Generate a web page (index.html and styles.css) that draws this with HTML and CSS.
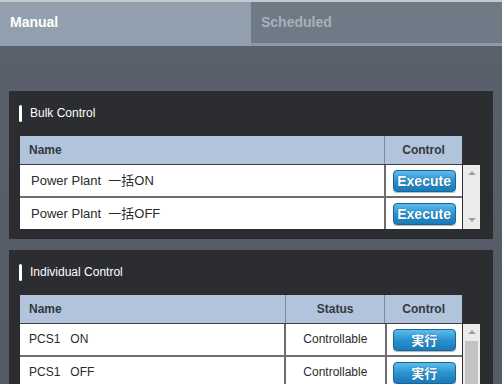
FILE: index.html
```html
<!DOCTYPE html>
<html lang="en">
<head>
    <meta charset="UTF-8">
    <meta name="viewport" content="width=device-width, initial-scale=1.0">
    <title>Control</title>
    <link rel="stylesheet" href="styles.css">
</head>
<body>
    <div class="tabs">
        <div class="tab active">Manual</div>
        <div class="tab">Scheduled</div>
    </div>

    <div class="content">
        <section class="panel">
            <h2 class="panel-title">Bulk Control</h2>
            <div class="grid">
                <div class="head">
                    <div class="cell name">Name</div>
                    <div class="cell ctrl">Control</div>
                </div>
                <div class="body">
                    <div class="rows">
                        <div class="row">
                            <div class="cell name big">Power Plant&nbsp;&nbsp;一括ON</div>
                            <div class="cell ctrl"><button class="btn">Execute</button></div>
                        </div>
                        <div class="row">
                            <div class="cell name big">Power Plant&nbsp;&nbsp;一括OFF</div>
                            <div class="cell ctrl"><button class="btn">Execute</button></div>
                        </div>
                    </div>
                    <div class="scrollbar">
                        <span class="arrow up"></span>
                        <span class="arrow down"></span>
                    </div>
                </div>
            </div>
        </section>

        <section class="panel">
            <h2 class="panel-title">Individual Control</h2>
            <div class="grid">
                <div class="head">
                    <div class="cell name short">Name</div>
                    <div class="cell status">Status</div>
                    <div class="cell ctrl">Control</div>
                </div>
                <div class="body">
                    <div class="rows">
                        <div class="row">
                            <div class="cell name short">PCS1&nbsp;&nbsp;&nbsp;ON</div>
                            <div class="cell status">Controllable</div>
                            <div class="cell ctrl"><button class="btn jp">実行</button></div>
                        </div>
                        <div class="row">
                            <div class="cell name short">PCS1&nbsp;&nbsp;&nbsp;OFF</div>
                            <div class="cell status">Controllable</div>
                            <div class="cell ctrl"><button class="btn jp">実行</button></div>
                        </div>
                    </div>
                    <div class="scrollbar">
                        <span class="arrow up"></span>
                        <span class="thumb"></span>
                    </div>
                </div>
            </div>
        </section>
    </div>
</body>
</html>
```

FILE: styles.css
```css
body {
    margin: 0;
    height: 384px;
    overflow: hidden;
    font-family: "Liberation Sans", "Noto Sans CJK JP", sans-serif;
    background: linear-gradient(#5a616c, #545b66);
    border-top: 2px solid #c6c9cd;
}

.tabs {
    display: flex;
    height: 44px;
    background-color: #8e99a7;
}

.tab {
    width: 251px;
    height: 41px;
    padding-left: 10px;
    box-sizing: border-box;
    line-height: 41px;
    font-size: 14px;
    font-weight: bold;
    color: #a9b0b9;
    background-color: #6f7a87;
}

.tab.active {
    height: 44px;
    color: #fff;
    background-color: #929fae;
}

.content {
    padding: 45px 9px 0 9px;
}

.panel {
    background-color: #2b2d31;
    padding: 14px 13px 10px 11px;
    margin-bottom: 11px;
}

.panel-title {
    margin: 0 0 14px 0;
    height: 17px;
    line-height: 17px;
    font-size: 12px;
    font-weight: normal;
    color: #fff;
    display: flex;
    align-items: center;
}

.panel-title::before {
    content: "";
    width: 3px;
    height: 17px;
    border-radius: 2px;
    background-color: #fff;
    margin: 0 8px 0 -1px;
}

.grid {
    width: 460px;
}

.head {
    display: flex;
    width: 442px;
    height: 28px;
    background-color: #b1c4dc;
    border-bottom: 1px solid #3c4048;
}

.head .cell {
    font-size: 12px;
    font-weight: bold;
    color: #333840;
    line-height: 28px;
}

.body {
    display: flex;
}

.rows {
    width: 442px;
}

.row {
    display: flex;
    height: 31px;
    background-color: #fff;
    border-bottom: 2px solid #6d6d6d;
}

.row:last-child {
    border-bottom: none;
}

.row .cell {
    line-height: 31px;
    font-size: 12px;
    color: #2a2a2a;
}

.cell.name {
    width: 365px;
    padding-left: 9px;
    box-sizing: border-box;
}

.cell.name.short {
    width: 266px;
}

.row .cell.big {
    font-size: 13px;
    padding-left: 11px;
}

.cell.status {
    width: 99px;
    text-align: center;
    border-left: 1px solid #6d6d6d;
}

.cell.ctrl {
    width: 77px;
    text-align: center;
    border-left: 1px solid #6d6d6d;
}

.head .cell.status,
.head .cell.ctrl {
    border-left: 1px solid #7d8898;
}

.row .cell.status,
.row .cell.ctrl {
    border-left: 2px solid #6d6d6d;
}

.row .cell.ctrl {
    width: 76px;
    display: flex;
    align-items: center;
    justify-content: center;
}

.btn {
    width: 63px;
    height: 22px;
    padding: 0;
    border: 1px solid #1a6596;
    border-radius: 4px;
    background: linear-gradient(#5cbcec, #2a92d0 50%, #1a7ab8);
    box-shadow: 0 1px 1px rgba(0, 0, 0, 0.3);
    color: #fff;
    font-family: "Liberation Sans", sans-serif;
    font-size: 14px;
    font-weight: bold;
    text-shadow: 0 0 1px #0f4d78;
}

.btn.jp {
    font-family: "Noto Sans CJK JP", sans-serif;
    font-size: 13px;
}

.scrollbar {
    width: 17px;
    margin-left: 1px;
    background-color: #ececec;
    display: flex;
    flex-direction: column;
    align-items: center;
    justify-content: space-between;
    padding: 6px 0 7px;
    box-sizing: border-box;
}

.arrow {
    width: 0;
    height: 0;
    border-left: 4px solid transparent;
    border-right: 4px solid transparent;
}

.arrow.up {
    border-bottom: 4px solid #a0a0a0;
}

.arrow.down {
    border-top: 4px solid #a0a0a0;
}

.thumb {
    width: 13px;
    flex: 1;
    margin-top: 7px;
    margin-bottom: -7px;
    background-color: #c3c3c3;
}
```
